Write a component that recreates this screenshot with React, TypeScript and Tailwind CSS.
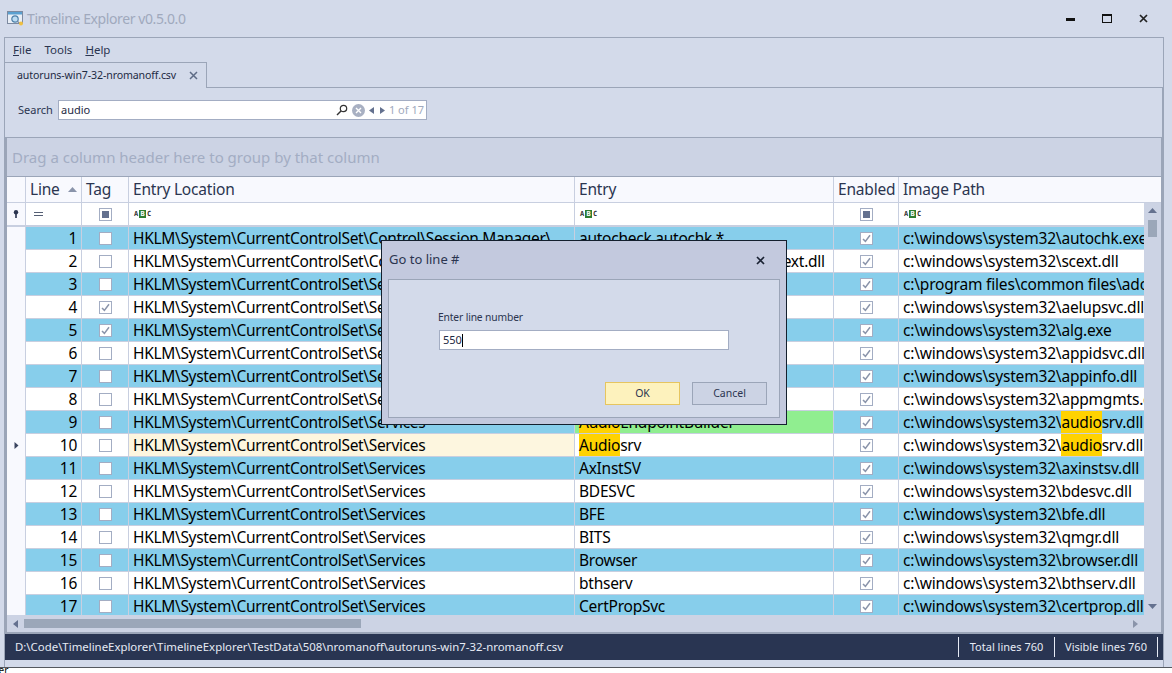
import React from "react";

const F = "font-['Noto_Sans','Liberation_Sans',sans-serif]";

type Seg = { t: string; h?: boolean };
type Row = { n: number; tag?: boolean; loc: string; entry: Seg[]; path: Seg[]; green?: boolean };

const base = "HKLM\\System\\CurrentControlSet\\";
const sys = "c:\\windows\\system32\\";
const rows: Row[] = [
  { n: 1, loc: base + "Control\\Session Manager\\", entry: [{ t: "autocheck autochk *" }], path: [{ t: sys + "autochk.exe" }] },
  { n: 2, loc: base + "Control\\SafeBoot\\AlternateShell", entry: [{ t: "c:\\windows\\system32\\sfcs\\scext.dll" }], path: [{ t: sys + "scext.dll" }] },
  { n: 3, loc: base + "Services", entry: [{ t: "AdobeARMservice" }], path: [{ t: "c:\\program files\\common files\\adobe\\arm" }] },
  { n: 4, tag: true, loc: base + "Services", entry: [{ t: "AeLookupSvc" }], path: [{ t: sys + "aelupsvc.dll" }] },
  { n: 5, tag: true, loc: base + "Services", entry: [{ t: "ALG" }], path: [{ t: sys + "alg.exe" }] },
  { n: 6, loc: base + "Services", entry: [{ t: "AppIDSvc" }], path: [{ t: sys + "appidsvc.dll" }] },
  { n: 7, loc: base + "Services", entry: [{ t: "Appinfo" }], path: [{ t: sys + "appinfo.dll" }] },
  { n: 8, loc: base + "Services", entry: [{ t: "AppMgmt" }], path: [{ t: sys + "appmgmts.dll" }] },
  { n: 9, loc: base + "Services", green: true, entry: [{ t: "Audio", h: true }, { t: "EndpointBuilder" }], path: [{ t: sys }, { t: "audio", h: true }, { t: "srv.dll" }] },
  { n: 10, loc: base + "Services", entry: [{ t: "Audio", h: true }, { t: "srv" }], path: [{ t: sys }, { t: "audio", h: true }, { t: "srv.dll" }] },
  { n: 11, loc: base + "Services", entry: [{ t: "AxInstSV" }], path: [{ t: sys + "axinstsv.dll" }] },
  { n: 12, loc: base + "Services", entry: [{ t: "BDESVC" }], path: [{ t: sys + "bdesvc.dll" }] },
  { n: 13, loc: base + "Services", entry: [{ t: "BFE" }], path: [{ t: sys + "bfe.dll" }] },
  { n: 14, loc: base + "Services", entry: [{ t: "BITS" }], path: [{ t: sys + "qmgr.dll" }] },
  { n: 15, loc: base + "Services", entry: [{ t: "Browser" }], path: [{ t: sys + "browser.dll" }] },
  { n: 16, loc: base + "Services", entry: [{ t: "bthserv" }], path: [{ t: sys + "bthserv.dll" }] },
  { n: 17, loc: base + "Services", entry: [{ t: "CertPropSvc" }], path: [{ t: sys + "certprop.dll" }] },
];

function Box({ checked, filter, white }: { checked?: boolean; filter?: boolean; white?: boolean }) {
  return (
    <div className={`w-[13px] h-[13px] border border-[#a3adc3] flex items-center justify-center ${white ? "bg-white" : ""}`}>
      {filter && <div className="w-[7px] h-[7px] bg-[#64718f]" />}
      {checked && (
        <svg width="11" height="11" viewBox="0 0 11 11" fill="none">
          <path d="M2 6 L4.4 8.4 L9 2.2" stroke="#8a94aa" strokeWidth="1.5" />
        </svg>
      )}
    </div>
  );
}

function Abc() {
  return (
    <div className="flex items-center h-[8px] font-['DejaVu_Sans_Mono',monospace] text-[7px] leading-[8px] font-bold text-[#333]">
      <span className="w-[4px] text-center">A</span>
      <span className="w-[7px] h-[8px] text-center bg-[#2f7d32] text-white ml-[1px]">B</span>
      <span className="w-[4px] text-center ml-[1px]">C</span>
    </div>
  );
}

function Segs({ s }: { s: Seg[] }) {
  return (
    <>
      {s.map((x, i) => (
        <span key={i} className={x.h ? "bg-[#ffd200]" : ""}>{x.t}</span>
      ))}
    </>
  );
}

function HeaderCell({ children }: { children?: React.ReactNode }) {
  return <div className="border-r border-[#c8cfe0] pl-[4px] flex items-center overflow-hidden whitespace-nowrap">{children}</div>;
}

function DataRow({ r }: { r: Row }) {
  const odd = r.n % 2 === 1;
  const bg = odd ? "bg-[#87ceeb]" : "bg-white";
  const cell = "border-r border-b border-[#c8cfe0] overflow-hidden whitespace-nowrap h-[23px] flex items-center";
  return (
    <div className="grid grid-cols-[19px_56px_47px_446px_259px_65px_245px] h-[23px] text-[15.5px] text-black tracking-[-0.25px]">
      <div className="bg-[#f8f9fe] border-r border-[#c8cfe0] h-[23px] flex items-center justify-center">
        {r.n === 10 && (
          <svg width="5" height="7" viewBox="0 0 5 7"><path d="M0.5 0 L4.5 3.5 L0.5 7Z" fill="#3a4560" /></svg>
        )}
      </div>
      <div className={`${cell} ${bg} justify-end pr-[4px] pt-[2px]`}>{r.n}</div>
      <div className={`${cell} ${bg} justify-center`}>
        <Box checked={r.tag} white={odd || r.tag} />
      </div>
      <div className={`${cell} pl-[4px] pt-[2px] tracking-[-0.33px] ${r.n === 10 ? "bg-[#fdf6df]" : bg}`}>{r.loc}</div>
      <div className={`${cell} pl-[4px] pt-[2px] ${r.green ? "bg-[#90ee90]" : bg}`}><Segs s={r.entry} /></div>
      <div className={`${cell} ${bg} justify-center`}>
        <Box checked white={odd} />
      </div>
      <div className={`border-b border-[#c8cfe0] overflow-hidden whitespace-nowrap h-[23px] flex items-center pl-[4px] pt-[2px] tracking-[-0.19px] ${bg}`}><Segs s={r.path} /></div>
    </div>
  );
}

function Logo() {
  return (
    <svg width="17" height="16" viewBox="0 0 17 16" className="shrink-0">
      <rect x="0.5" y="1.5" width="15" height="12" fill="#e8eef6" stroke="#7d8aa0" />
      <rect x="1" y="2" width="14" height="2.5" fill="#5aa0d0" />
      <circle cx="8" cy="9" r="3.2" fill="#bcdcf2" stroke="#4d7fa8" strokeWidth="1.2" />
      <path d="M10.5 11.5 L13 13.5" stroke="#7d8aa0" strokeWidth="1.4" />
      <circle cx="14" cy="13.5" r="2" fill="#f0c040" />
    </svg>
  );
}

export default function App() {
  return (
    <div className={`relative w-[1172px] h-[673px] bg-white overflow-hidden ${F} text-[#2b3550]`}>
      <div className="h-[668px] bg-[#d3daea] border-b border-[#55595f] flex flex-col">
        {/* title bar */}
        <div className="h-[37px] shrink-0 flex items-center pl-[7px] pr-[24px] pb-[1px]">
          <Logo />
          <span className="ml-[3px] text-[14px] tracking-[-0.4px] text-[#a0a9bd]">Timeline Explorer v0.5.0.0</span>
          <div className="ml-auto flex items-center gap-[27px]">
            <div className="w-[9px] h-[3px] bg-[#111] mt-[2px]" />
            <div className="w-[10px] h-[9px] border border-t-2 border-[#111]" />
            <svg width="9" height="9" viewBox="0 0 9 9"><path d="M1 1 L8 8 M8 1 L1 8" stroke="#222" strokeWidth="1.7" /></svg>
          </div>
        </div>
        {/* main frame */}
        <div className="ml-[4px] mr-[8px] flex-1 min-h-0 flex flex-col border-t border-l border-r border-[#9ba5b8] pb-[7px]">
          <div className="h-[24px] shrink-0 flex items-center pl-[8px] gap-[13px] text-[11.5px] text-[#2b3550]">
            <span><u>F</u>ile</span>
            <span>Tools</span>
            <span><u>H</u>elp</span>
          </div>
          <div className="h-[26px] shrink-0 flex">
            <div className="w-[202px] border-t border-r border-[#9ba5b8] flex items-center pl-[12px] text-[10.6px] tracking-[-0.12px] text-[#1e2a44] whitespace-nowrap">
              <span>autoruns-win7-32-nromanoff.csv</span>
              <svg width="9" height="9" viewBox="0 0 9 9" className="ml-auto mr-[8px]"><path d="M1 1 L8 8 M8 1 L1 8" stroke="#5f6c86" strokeWidth="1.5" /></svg>
            </div>
            <div className="flex-1 border-b border-[#9ba5b8]" />
          </div>
          <div className="h-[49px] shrink-0 flex items-start pl-[13px] pt-[12px] border-r border-[#9ba5b8]">
            <span className="text-[11px] mt-[2px] text-[#2b3550] w-[40px]">Search</span>
            <div className="w-[369px] h-[20px] bg-white border border-[#a3adc3] flex items-center pl-[2px] text-[11px] text-[#1e2a44]">
              <span>audio</span>
              <div className="ml-auto flex items-center">
                <svg width="12" height="12" viewBox="0 0 12 12" fill="none"><circle cx="7.5" cy="4.5" r="3.2" stroke="#333" strokeWidth="1.2" /><path d="M5 7 L1 11" stroke="#333" strokeWidth="1.5" /></svg>
                <svg width="13" height="13" viewBox="0 0 13 13" className="ml-[4px]"><circle cx="6.5" cy="6.5" r="6.5" fill="#a8b0c2" /><path d="M4 4 L9 9 M9 4 L4 9" stroke="#fff" strokeWidth="1.4" /></svg>
                <svg width="5" height="7" viewBox="0 0 5 7" className="ml-[4px]"><path d="M5 0 L0 3.5 L5 7Z" fill="#64718f" /></svg>
                <svg width="5" height="7" viewBox="0 0 5 7" className="ml-[6px]"><path d="M0 0 L5 3.5 L0 7Z" fill="#64718f" /></svg>
                <span className="ml-[4px] mr-[2px] text-[#a0a9bd] text-[11px]">1 of 17</span>
              </div>
            </div>
          </div>
          {/* grid */}
          <div className="flex-1 min-h-0 flex flex-col border-l-2 border-r-2 border-[#9ba5b8] border-t border-t-[#9ba5b8] border-b-2 border-b-[#9ba5b8]">
            <div className="h-[39px] shrink-0 bg-[#ccd3e4] border-b border-[#9ba5b8] flex items-center pl-[5px] text-[15px] text-[#a3adc3]">
              Drag a column header here to group by that column
            </div>
            <div className="grid grid-cols-[19px_56px_47px_446px_259px_65px_1fr] h-[26px] shrink-0 bg-[#f8f9fe] border-b border-[#c8cfe0] text-[15.5px] text-[#2b3550] tracking-[-0.2px]">
              <HeaderCell />
              <HeaderCell>
                <span>Line</span>
                <svg width="9" height="5" viewBox="0 0 9 5" className="ml-[8px]"><path d="M4.5 0 L9 5 L0 5Z" fill="#8a94aa" /></svg>
              </HeaderCell>
              <HeaderCell>Tag</HeaderCell>
              <HeaderCell>Entry Location</HeaderCell>
              <HeaderCell>Entry</HeaderCell>
              <HeaderCell>Enabled</HeaderCell>
              <div className="pl-[4px] flex items-center">Image Path</div>
            </div>
            <div className="flex-1 min-h-0 flex">
              <div className="w-[1137px] shrink-0 flex flex-col">
                <div className="grid grid-cols-[19px_56px_47px_446px_259px_65px_245px] h-[24px] shrink-0 bg-white border-b-2 border-[#c8cfe0]">
                  <div className="bg-[#f8f9fe] border-r border-[#c8cfe0] flex items-center justify-center">
                    <svg width="6" height="8" viewBox="0 0 6 8"><circle cx="3" cy="2.2" r="2.2" fill="#2b3550" /><rect x="2.2" y="3" width="1.6" height="5" fill="#2b3550" /></svg>
                  </div>
                  <div className="border-r border-[#c8cfe0] flex items-center pl-[8px]">
                    <div className="w-[9px] h-[4px] border-t border-b border-[#555e74]" />
                  </div>
                  <div className="border-r border-[#c8cfe0] flex items-center justify-center"><Box filter /></div>
                  <div className="border-r border-[#c8cfe0] flex items-center pl-[5px]"><Abc /></div>
                  <div className="border-r border-[#c8cfe0] flex items-center pl-[5px]"><Abc /></div>
                  <div className="border-r border-[#c8cfe0] flex items-center justify-center"><Box filter /></div>
                  <div className="flex items-center pl-[5px]"><Abc /></div>
                </div>
                <div className="flex-1 min-h-0 overflow-hidden">
                  {rows.map((r) => <DataRow key={r.n} r={r} />)}
                </div>
                <div className="h-[17px] shrink-0 bg-[#ccd3e4] flex items-center">
                  <div className="w-[17px] flex justify-center"><svg width="5" height="8" viewBox="0 0 5 8"><path d="M5 0 L0 4 L5 8Z" fill="#64718f" /></svg></div>
                  <div className="w-[337px] h-[9px] bg-[#9ba7b9]" />
                  <div className="ml-auto mr-[6px]"><svg width="5" height="8" viewBox="0 0 5 8"><path d="M0 0 L5 4 L0 8Z" fill="#8a94aa" /></svg></div>
                </div>
              </div>
              <div className="w-[17px] bg-[#ccd3e4] flex flex-col items-center pt-[5px]">
                <svg width="9" height="5" viewBox="0 0 9 5"><path d="M4.5 0 L9 5 L0 5Z" fill="#64718f" /></svg>
                <div className="w-[9px] h-[17px] bg-[#9ba7b9] mt-[7px]" />
                <div className="h-[367px]" />
                <svg width="9" height="5" viewBox="0 0 9 5"><path d="M0 0 L9 0 L4.5 5Z" fill="#64718f" /></svg>
              </div>
            </div>
          </div>
          {/* status bar */}
          <div className="h-[26px] shrink-0 bg-[#293552] text-[#e6ebf5] text-[11.4px] flex items-center pl-[10px]">
            <span>D:\Code\TimelineExplorer\TimelineExplorer\TestData\508\nromanoff\autoruns-win7-32-nromanoff.csv</span>
            <div className="ml-auto flex items-center h-[20px] pr-[5px] text-[11px]">
              <div className="border-l border-[#e6ebf5] h-[20px] w-[96px] flex items-center justify-center">Total lines 760</div>
              <div className="border-l border-r border-[#e6ebf5] h-[20px] w-[104px] flex items-center justify-center">Visible lines 760</div>
            </div>
          </div>
        </div>
      </div>
      <div className="text-[10px] leading-[5px] text-black -ml-[5px] overflow-hidden h-[5px]">ter</div>

      {/* dialog */}
      <div className="absolute left-[381px] top-[240px] w-[406px] h-[185px] bg-[#c3c9de] border border-[#14202e] flex flex-col">
        <div className="h-[38px] shrink-0 flex items-center pl-[7px] pr-[21px] text-[13px] text-[#2b3550]">
          <span>Go to line #</span>
          <svg width="9" height="9" viewBox="0 0 9 9" className="ml-auto"><path d="M1 1 L8 8 M8 1 L1 8" stroke="#1a2233" strokeWidth="1.7" /></svg>
        </div>
        <div className="mx-[6px] mb-[6px] flex-1 bg-[#d3daea] border border-[#9ba5b8] pl-[50px] pr-[12px] pt-[27px] flex flex-col">
          <span className="text-[10.3px] tracking-[-0.15px] leading-[20px] text-[#2b3550] -ml-[1px]">Enter line number</span>
          <div className="w-[290px] h-[20px] mt-[3px] bg-white border border-[#a3adc3] flex items-center pl-[3px] text-[11px] text-[#1e2a44]">
            550<div className="w-[1px] h-[13px] bg-black" />
          </div>
          <div className="flex justify-end gap-[12px] mt-[32px]">
            <div className="w-[75px] h-[23px] bg-[#fdf2bd] border border-[#e6c55f] flex items-center justify-center text-[10.5px] text-[#2b3550]">OK</div>
            <div className="w-[75px] h-[23px] bg-[#ccd3e4] border border-[#9ba5b8] flex items-center justify-center text-[10.5px] text-[#2b3550]">Cancel</div>
          </div>
        </div>
      </div>
    </div>
  );
}
